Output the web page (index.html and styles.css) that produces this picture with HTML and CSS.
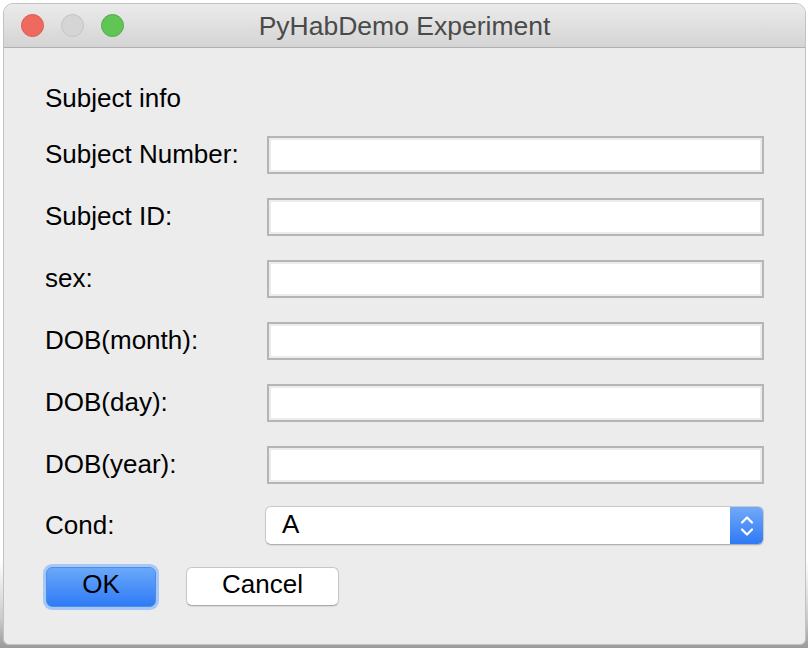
FILE: index.html
```html
<!DOCTYPE html>
<html>
<head>
<meta charset="utf-8">
<title>PyHabDemo Experiment</title>
<link rel="stylesheet" href="styles.css">
</head>
<body>
<div class="backdrop">
  <div class="window">
    <div class="titlebar">
      <div class="lights">
        <span class="light red"></span>
        <span class="light gray"></span>
        <span class="light green"></span>
      </div>
      <div class="title">PyHabDemo Experiment</div>
    </div>
    <div class="content">
      <div class="heading">Subject info</div>
      <div class="form">
        <div class="row"><label>Subject Number:</label><div class="field"></div></div>
        <div class="row"><label>Subject ID:</label><div class="field"></div></div>
        <div class="row"><label>sex:</label><div class="field"></div></div>
        <div class="row"><label>DOB(month):</label><div class="field"></div></div>
        <div class="row"><label>DOB(day):</label><div class="field"></div></div>
        <div class="row"><label>DOB(year):</label><div class="field"></div></div>
        <div class="row cond"><label>Cond:</label>
          <div class="select">
            <span class="value">A</span>
            <span class="stepper">
              <svg width="14" height="22" viewBox="0 0 14 22">
                <path d="M2 7.5 L7 2.5 L12 7.5" fill="none" stroke="#fff" stroke-width="2.2" stroke-linecap="round" stroke-linejoin="round"/>
                <path d="M2 14.5 L7 19.5 L12 14.5" fill="none" stroke="#fff" stroke-width="2.2" stroke-linecap="round" stroke-linejoin="round"/>
              </svg>
            </span>
          </div>
        </div>
      </div>
      <div class="buttons">
        <button class="btn ok">OK</button>
        <button class="btn cancel">Cancel</button>
      </div>
    </div>
  </div>
</div>
</body>
</html>
```
FILE: styles.css
```css
html, body {
  margin: 0;
  padding: 0;
  background: #ffffff;
}
body {
  width: 808px;
  height: 648px;
  overflow: hidden;
  font-family: "Liberation Sans", Arial, sans-serif;
}
.backdrop {
  width: 808px;
  height: 648px;
  padding: 3px 2px 0 3px;
  box-sizing: border-box;
  background: linear-gradient(#ffffff 0, #ffffff 560px, #c9c9c9 620px, #9a9a9a 648px);
}
.window {
  width: 803px;
  height: 642px;
  box-sizing: border-box;
  border: 1px solid #c2c2c2;
  border-radius: 10px 10px 6px 6px;
  background: #ececec;
  overflow: hidden;
  display: flex;
  flex-direction: column;
}
.titlebar {
  height: 44px;
  flex: 0 0 44px;
  box-sizing: border-box;
  background: linear-gradient(#ebebeb, #d4d4d4);
  border-bottom: 1px solid #b1b1b1;
  position: relative;
  display: flex;
  align-items: center;
  justify-content: center;
}
.lights {
  position: absolute;
  left: 17px;
  top: 10px;
  display: flex;
  gap: 17px;
}
.light {
  width: 23px;
  height: 23px;
  border-radius: 50%;
  box-sizing: border-box;
}
.light.red { background: #ee6a5f; border: 1px solid #dc5b50; }
.light.gray { background: #d5d5d5; border: 1px solid #c3c3c3; }
.light.green { background: #61c555; border: 1px solid #52ac45; }
.title {
  font-family: "Liberation Sans", Arial, sans-serif;
  font-size: 26.5px;
  color: #4a4a4a;
  margin-top: 2px;
}
.content {
  padding: 35px 41px 0 41px;
  display: flex;
  flex-direction: column;
}
.heading {
  font-size: 26px;
  color: #000;
  height: 30px;
  line-height: 30px;
}
.form {
  margin-top: 23px;
  display: flex;
  flex-direction: column;
  gap: 24px;
}
.row {
  display: flex;
  align-items: center;
  height: 38px;
}
.row label {
  font-size: 26px;
  color: #000;
  width: 222px;
  flex: 0 0 222px;
  line-height: 30px;
  margin-top: -2px;
}
.field {
  width: 498px;
  height: 38px;
  box-sizing: border-box;
  border: 2px solid #b5b5b5;
  background: #fff;
  box-shadow: inset 0 0 0 2px #ececec;
}
.row.cond {
  margin-top: -2px;
  height: 39px;
}
.row.cond label {
  width: 220px;
  flex-basis: 220px;
}
.select {
  width: 500px;
  height: 39px;
  box-sizing: border-box;
  border: 1px solid #c8c8c8;
  border-bottom-color: #b0b0b0;
  border-radius: 6px;
  background: #fff;
  display: flex;
  align-items: center;
  justify-content: space-between;
  overflow: hidden;
  box-shadow: 0 1px 1px rgba(0,0,0,0.08);
}
.select .value {
  font-size: 26px;
  padding-left: 16px;
  margin-top: -2px;
}
.stepper {
  width: 33px;
  height: 100%;
  background: linear-gradient(#72aaf8, #2f79f5);
  display: flex;
  align-items: center;
  justify-content: center;
}
.buttons {
  margin-top: 22px;
  display: flex;
  gap: 30px;
  align-items: flex-start;
}
.btn {
  font-family: "Liberation Sans", Arial, sans-serif;
  font-size: 26px;
  color: #000;
  border-radius: 6px;
  padding: 0 0 6px 0;
  line-height: 30px;
  box-sizing: border-box;
}
.btn.ok {
  width: 110px;
  height: 40px;
  background: linear-gradient(#6aa8f9, #2e7bf6);
  border: 1px solid #4c8de8;
  box-shadow: 0 0 0 3px #a6c8f7;
  margin-left: 1px;
}
.btn.cancel {
  width: 153px;
  height: 39px;
  background: #fff;
  border: 1px solid #c6c6c6;
  border-bottom-color: #aaaaaa;
  box-shadow: 0 1px 1px rgba(0,0,0,0.08);
}
```
